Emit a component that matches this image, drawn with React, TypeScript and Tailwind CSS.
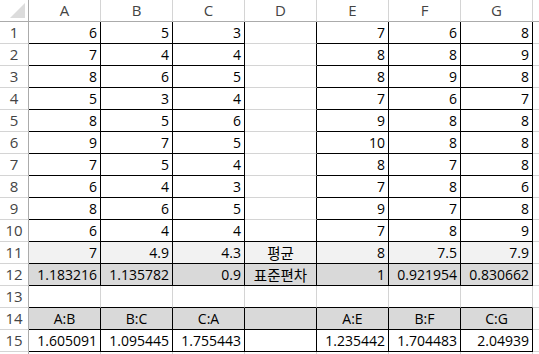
const cols = ["A", "B", "C", "D", "E", "F", "G", ""];

const data: string[][] = [
  ["6", "5", "3", "", "7", "6", "8"],
  ["7", "4", "4", "", "8", "8", "9"],
  ["8", "6", "5", "", "8", "9", "8"],
  ["5", "3", "4", "", "7", "6", "7"],
  ["8", "5", "6", "", "9", "8", "8"],
  ["9", "7", "5", "", "10", "8", "8"],
  ["7", "5", "4", "", "8", "7", "8"],
  ["6", "4", "3", "", "7", "8", "6"],
  ["8", "6", "5", "", "9", "7", "8"],
  ["6", "4", "4", "", "7", "8", "9"],
  ["7", "4.9", "4.3", "평균", "8", "7.5", "7.9"],
  ["1.183216", "1.135782", "0.9", "표준편차", "1", "0.921954", "0.830662"],
  ["", "", "", "", "", "", ""],
  ["A:B", "B:C", "C:A", "", "A:E", "B:F", "C:G"],
  ["1.605091", "1.095445", "1.755443", "", "1.235442", "1.704483", "2.04939"],
  ["", "", "", "", "", "", ""],
];

// which cells carry the black all-around border
function isBox(r: number, c: number) {
  if (c > 6 || r > 15) return false;
  if (r <= 10) return c !== 3;
  return r === 11 || r === 12 || r === 14 || r === 15;
}

function Cell({ r, c }: { r: number; c: number }) {
  const text = data[r - 1]?.[c] ?? "";
  const right = isBox(r, c) || isBox(r, c + 1);
  const bottom = isBox(r, c) || isBox(r + 1, c);
  const bg =
    c > 6 ? "bg-white" : r === 11 ? "bg-[#f2f2f2]" : r === 12 || r === 14 ? "bg-[#d9d9d9]" : "bg-white";
  const korean = /[가-힣]/.test(text);
  const centered = korean || r === 14;
  return (
    <div
      className={`h-[22px] flex items-center px-[3px] border-r border-b ${bg} ${
        right ? "border-r-black" : "border-r-[#d4d4d4]"
      } ${bottom ? "border-b-black" : "border-b-[#d4d4d4]"} ${
        centered ? "justify-center" : "justify-end"
      }`}
    >
      {korean ? (
        <span className="text-[14.5px] font-['Noto_Sans_CJK_KR',sans-serif]">{text}</span>
      ) : (
        <span>{text}</span>
      )}
    </div>
  );
}

export default function App() {
  const rows = Array.from({ length: 16 }, (_, i) => i + 1);
  return (
    <div className="w-[539px] h-[354px] overflow-hidden bg-white text-black text-[14px] font-['Open_Sans','Noto_Sans_CJK_KR',sans-serif]">
      <div className="grid grid-cols-[29px_repeat(8,72px)] w-max">
        <div className="h-[22px] border-r border-b border-[#ababab] bg-white relative">
          <svg className="absolute right-[3px] bottom-[3px]" width="15" height="15" viewBox="0 0 15 15">
            <polygon points="15,0 15,15 0,15" fill="#dcdcdc" />
          </svg>
        </div>
        {cols.map((h, i) => (
          <div
            key={i}
            className="h-[22px] flex items-center justify-center bg-white border-r border-r-[#d4d4d4] border-b border-b-[#ababab] text-[#444] text-[15px]"
          >
            {h}
          </div>
        ))}
        {rows.map((r) => (
          <div key={r} className="contents">
            <div className="h-[22px] flex items-center justify-center bg-white border-r border-r-[#ababab] border-b border-b-[#d4d4d4] text-[#444] text-[15px]">
              {r <= 15 ? r : ""}
            </div>
            {cols.map((_, c) => (
              <Cell key={c} r={r} c={c} />
            ))}
          </div>
        ))}
      </div>
    </div>
  );
}
